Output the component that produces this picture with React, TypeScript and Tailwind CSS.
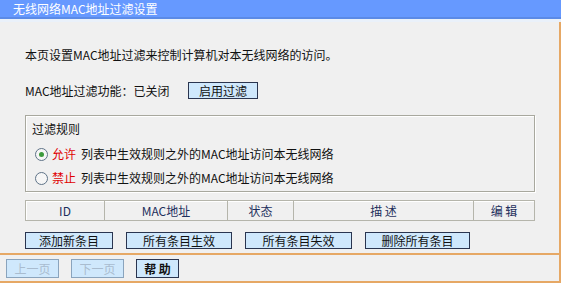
import React from "react";

const font = { fontFamily: '"Noto Sans CJK SC", "Liberation Sans", sans-serif' };

function Btn({ children, w, disabled }: { children: React.ReactNode; w: string; disabled?: boolean }) {
  return (
    <div
      className={`${w} h-[17px] flex items-center justify-center text-[12px] leading-none bg-[#cfe8fc] border ${
        disabled ? "border-[#8aa4bd] text-[#a9bccf]" : "border-[#2a3550] text-[#111]"
      }`}
    >
      {children}
    </div>
  );
}

function Radio({ checked }: { checked?: boolean }) {
  return (
    <div className="w-[13px] h-[13px] rounded-full border border-[#5f7388] bg-[#f6f6f6] flex items-center justify-center">
      {checked && <div className="w-[5px] h-[5px] rounded-full bg-[#3c9a3c]" />}
    </div>
  );
}

export default function App() {
  return (
    <div className="w-[561px] h-[283px] flex flex-col bg-[#f0f0f0] text-[#111] overflow-hidden" style={font}>
      <div className="h-[17px] bg-[#6699ff] text-white text-[12px] leading-[17px] pl-[13px] shrink-0">
        无线网络MAC地址过滤设置
      </div>
      <div className="h-[2px] bg-[#5b8ae6] shrink-0" />
      <div className="h-[3px] bg-[#eaf1fa] shrink-0" />
      <div className="flex-1 flex flex-col border-r-2 border-b-2 border-[#e6a865]">
        <div className="pl-[25px] pr-[25px] flex flex-col">
          <div className="mt-[25px] h-[16px] text-[12px] leading-[16px]">本页设置MAC地址过滤来控制计算机对本无线网络的访问。</div>
          <div className="mt-[19px] h-[17px] flex items-center text-[12px]">
            <span className="w-[163px]">MAC地址过滤功能：已关闭</span>
            <Btn w="w-[70px]">启用过滤</Btn>
          </div>
          <div className="mt-[16px] w-[510px] h-[77px] border border-[#a8a89e] shadow-[inset_1px_1px_0_#ffffff,1px_1px_0_#ffffff] flex flex-col text-[12px]">
            <div className="mt-[6px] ml-[6px] h-[14px] leading-[14px]">过滤规则</div>
            <div className="mt-[11px] ml-[9px] h-[14px] flex items-center">
              <Radio checked />
              <span className="ml-[4px] text-[#e00000]">允许</span>
              <span className="ml-[5px]">列表中生效规则之外的MAC地址访问本无线网络</span>
            </div>
            <div className="mt-[10px] ml-[9px] h-[14px] flex items-center">
              <Radio />
              <span className="ml-[4px] text-[#e00000]">禁止</span>
              <span className="ml-[5px]">列表中生效规则之外的MAC地址访问本无线网络</span>
            </div>
          </div>
          <div className="mt-[8px] w-[510px] h-[21px] flex text-[12px] text-[#1d2f5c] border border-[#b5b5ab] shadow-[inset_1px_1px_0_#ffffff]">
            <div className="w-[79px] flex items-center justify-center border-r border-[#b5b5ab]">ID</div>
            <div className="w-[123px] flex items-center justify-center border-r border-[#b5b5ab]">MAC地址</div>
            <div className="w-[66px] flex items-center justify-center border-r border-[#b5b5ab]">状态</div>
            <div className="w-[180px] flex items-center justify-center border-r border-[#b5b5ab]">描&nbsp;述</div>
            <div className="flex-1 flex items-center justify-center">编&nbsp;辑</div>
          </div>
          <div className="mt-[11px] flex gap-[13px]">
            <Btn w="w-[88px]">添加新条目</Btn>
            <Btn w="w-[106px]">所有条目生效</Btn>
            <Btn w="w-[107px]">所有条目失效</Btn>
            <Btn w="w-[105px]">删除所有条目</Btn>
          </div>
        </div>
        <div className="mt-[4px] h-[2px] bg-[#e6a865]" />
        <div className="pl-[6px] mt-[4px] flex gap-[12px]">
          <Btn w="w-[53px] !h-[19px]" disabled>上一页</Btn>
          <Btn w="w-[53px] !h-[19px]" disabled>下一页</Btn>
          <Btn w="w-[43px] !h-[19px]"><span className="font-bold">帮&nbsp;助</span></Btn>
        </div>
      </div>
    </div>
  );
}
